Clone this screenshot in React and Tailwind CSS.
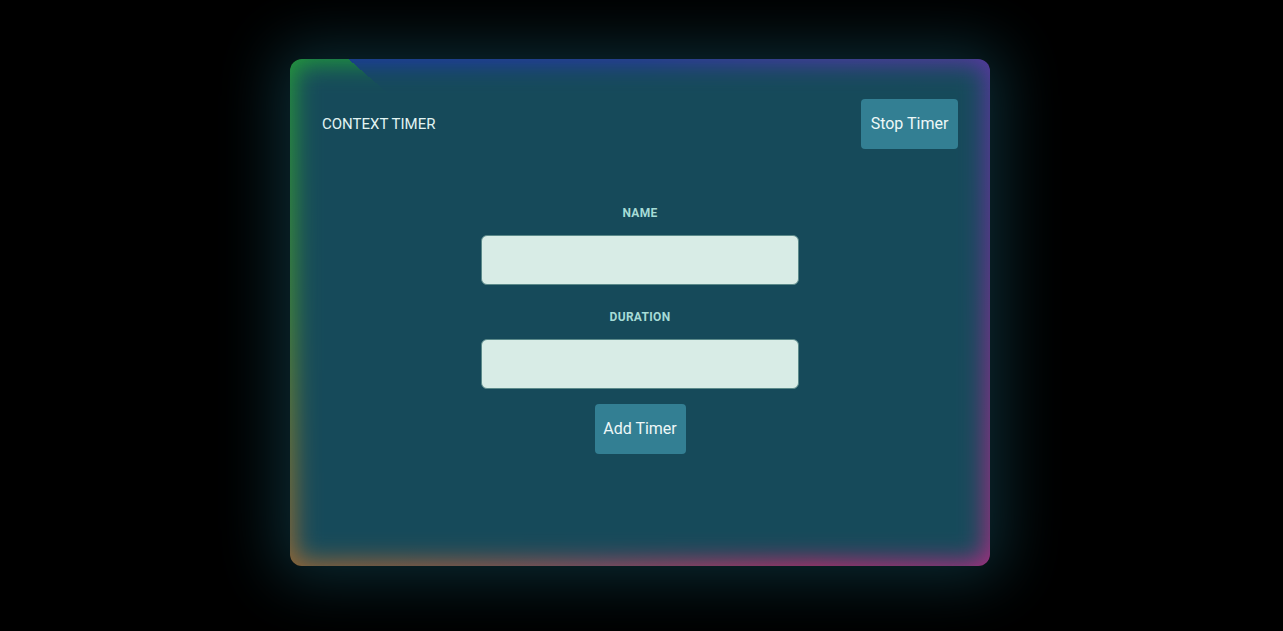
import React from 'react';

const Field = ({ label }) => (
  <div className="flex flex-col items-center">
    <label className="text-[12px] leading-4 font-bold tracking-wide text-[#a6dcd6] mb-[14px]">{label}</label>
    <input
      type="text"
      className="w-[318px] h-[50px] rounded-md bg-[#d8ece6] border border-[#5b8a8a] outline-none"
    />
  </div>
);

export default function App() {
  return (
    <div className="min-h-[631px] bg-black flex pl-[290px] pt-[59px] font-['Roboto',sans-serif]">
      <div className="relative w-[700px] h-[507px] rounded-xl overflow-hidden shadow-[0_0_60px_14px_rgba(18,70,84,0.6)] bg-[conic-gradient(from_0deg,#2c3aa6_0deg,#4e3aa6_40deg,#6a3494_80deg,#a03080_125deg,#c02a6e_145deg,#9e4c5e_190deg,#9a6236_230deg,#4a8a36_270deg,#1f9a3c_311deg,#1d3aa6_311deg,#2c3aa6_360deg)]">
        {/* blurred panel over the gradient */}
        <div className="absolute inset-[5px] rounded-xl bg-[#164a5a] blur-[12px]" />

        <div className="relative flex flex-col">
          {/* Header */}
          <div className="flex items-center justify-between px-8 pt-10">
            <h1 className="text-[15px] text-[#e2f4f2]">CONTEXT TIMER</h1>
            <button className="w-[97px] h-[50px] rounded bg-[#337f93] text-[16px] text-[#eef8f8]">
              Stop Timer
            </button>
          </div>

          {/* Form */}
          <div className="flex flex-col items-center mt-[56px]">
            <Field label="NAME" />
            <div className="mt-6">
              <Field label="DURATION" />
            </div>
            <button className="mt-[15px] w-[91px] h-[50px] rounded bg-[#337f93] text-[16px] text-[#eef8f8]">
              Add Timer
            </button>
          </div>
        </div>
      </div>
    </div>
  );
}
